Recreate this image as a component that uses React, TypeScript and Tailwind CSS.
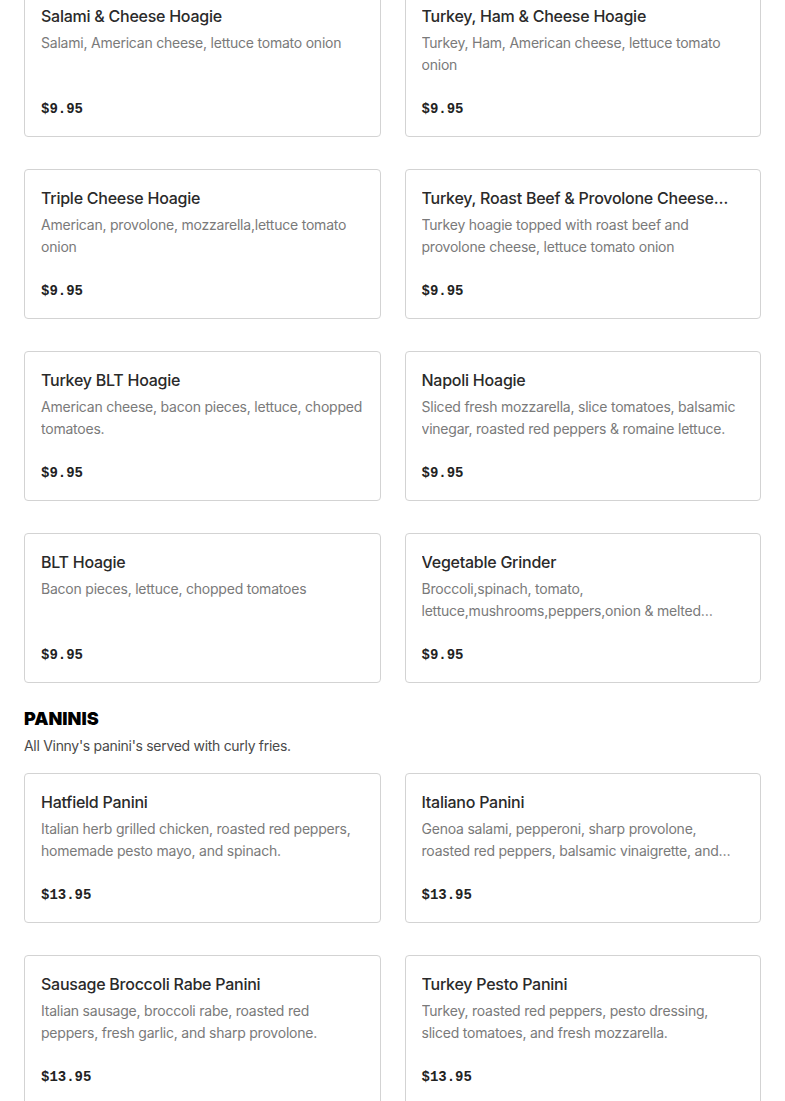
import React from 'react';

type Item = { name: string; desc: string; price: string };

const hoagies: Item[] = [
  { name: 'Salami & Cheese Hoagie', desc: 'Salami, American cheese, lettuce tomato onion', price: '$9.95' },
  { name: 'Turkey, Ham & Cheese Hoagie', desc: 'Turkey, Ham, American cheese, lettuce tomato onion', price: '$9.95' },
  { name: 'Triple Cheese Hoagie', desc: 'American, provolone, mozzarella,lettuce tomato onion', price: '$9.95' },
  { name: 'Turkey, Roast Beef & Provolone Cheese Hoagie', desc: 'Turkey hoagie topped with roast beef and provolone cheese, lettuce tomato onion', price: '$9.95' },
  { name: 'Turkey BLT Hoagie', desc: 'American cheese, bacon pieces, lettuce, chopped tomatoes.', price: '$9.95' },
  { name: 'Napoli Hoagie', desc: 'Sliced fresh mozzarella, slice tomatoes, balsamic vinegar, roasted red peppers & romaine lettuce.', price: '$9.95' },
  { name: 'BLT Hoagie', desc: 'Bacon pieces, lettuce, chopped tomatoes', price: '$9.95' },
  { name: 'Vegetable Grinder', desc: 'Broccoli,spinach, tomato, lettuce,mushrooms,peppers,onion & melted mozzarella cheese', price: '$9.95' },
];

const paninis: Item[] = [
  { name: 'Hatfield Panini', desc: 'Italian herb grilled chicken, roasted red peppers, homemade pesto mayo, and spinach.', price: '$13.95' },
  { name: 'Italiano Panini', desc: 'Genoa salami, pepperoni, sharp provolone, roasted red peppers, balsamic vinaigrette, and fresh mozzarella.', price: '$13.95' },
  { name: 'Sausage Broccoli Rabe Panini', desc: 'Italian sausage, broccoli rabe, roasted red peppers, fresh garlic, and sharp provolone.', price: '$13.95' },
  { name: 'Turkey Pesto Panini', desc: 'Turkey, roasted red peppers, pesto dressing, sliced tomatoes, and fresh mozzarella.', price: '$13.95' },
];

const MenuCard: React.FC<{ item: Item }> = ({ item }) => (
  <div className="bg-white border border-[#d3d3d3] rounded-[4px] p-4 h-[150px] flex flex-col">
    <h3 className="pr-3 text-[16px] leading-6 font-medium tracking-[-0.25px] text-[#2a2a2a] truncate">{item.name}</h3>
    <p className="mt-1 text-[14px] leading-[22px] tracking-[-0.22px] text-[#7a7a7a] line-clamp-2 h-[44px]">{item.desc}</p>
    <div className="mt-[23px] text-[14px] leading-5 font-bold text-[#222] font-['Liberation_Mono',monospace]">
      {item.price}
    </div>
  </div>
);

export default function App() {
  return (
    <div className="bg-white min-h-screen px-6 font-['Inter',sans-serif] overflow-hidden">
      <div className="-mt-[13px] grid grid-cols-2 gap-x-6 gap-y-8">
        {hoagies.map((item) => (
          <MenuCard key={item.name} item={item} />
        ))}
      </div>

      {/* Paninis */}
      <div className="mt-6">
        <h2 className="text-[18px] leading-6 font-black text-black uppercase">Paninis</h2>
        <p className="mt-[5px] text-[14px] leading-5 tracking-[-0.3px] text-[#4a4a4a]">All Vinny's panini's served with curly fries.</p>
      </div>
      <div className="mt-[17px] grid grid-cols-2 gap-x-6 gap-y-8 pb-8">
        {paninis.map((item) => (
          <MenuCard key={item.name} item={item} />
        ))}
      </div>
    </div>
  );
}
